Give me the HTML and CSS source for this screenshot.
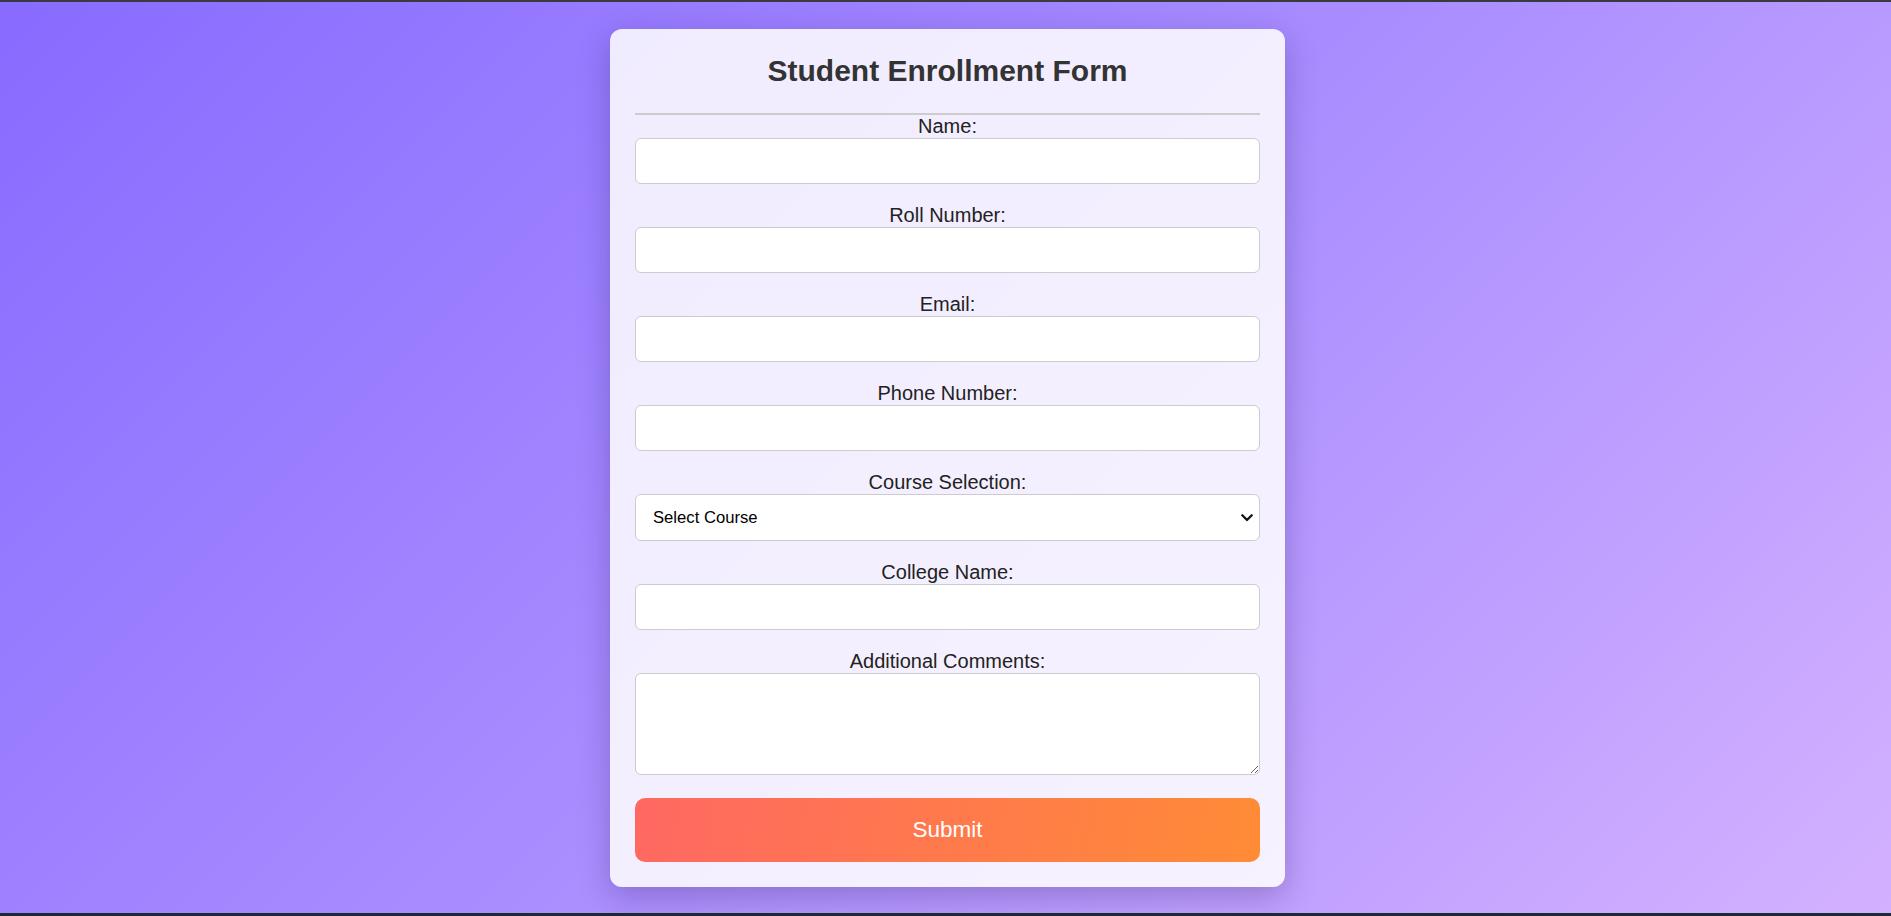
FILE: index.html
```html
<!DOCTYPE html>
<html lang="en">
<head>
<meta charset="UTF-8">
<title>Student Enrollment Form</title>
<link rel="stylesheet" href="styles.css">
</head>
<body>
  <div class="card">
    <h2 class="title">Student Enrollment Form</h2>
    <form class="form">
      <div class="group">
        <label class="label" for="name">Name:</label>
        <input class="field" type="text" id="name">
      </div>
      <div class="group">
        <label class="label" for="roll">Roll Number:</label>
        <input class="field" type="text" id="roll">
      </div>
      <div class="group">
        <label class="label" for="email">Email:</label>
        <input class="field" type="email" id="email">
      </div>
      <div class="group">
        <label class="label" for="phone">Phone Number:</label>
        <input class="field" type="tel" id="phone">
      </div>
      <div class="group">
        <label class="label" for="course">Course Selection:</label>
        <div class="select-wrap">
          <select class="field select" id="course">
            <option>Select Course</option>
          </select>
          <svg class="chevron" width="12" height="8" viewBox="0 0 12 8" aria-hidden="true">
            <path d="M1.3 1.3 L6 6 L10.7 1.3" fill="none" stroke="#111" stroke-width="2.3" stroke-linecap="round" stroke-linejoin="round"/>
          </svg>
        </div>
      </div>
      <div class="group">
        <label class="label" for="college">College Name:</label>
        <input class="field" type="text" id="college">
      </div>
      <div class="group">
        <label class="label" for="comments">Additional Comments:</label>
        <textarea class="field textarea" id="comments"></textarea>
      </div>
      <button class="submit" type="button">Submit</button>
    </form>
  </div>
</body>
</html>
```
FILE: styles.css
```css
* {
  box-sizing: border-box;
}

html, body {
  margin: 0;
  padding: 0;
}

body {
  height: 916px;
  padding-top: 27px;
  border-top: 2px solid #3b3b3d;
  border-bottom: 3px solid #1d2a33;
  background: linear-gradient(135deg, #886bff 0%, #a98dff 50%, #d4b1ff 100%);
  font-family: "Liberation Sans", Arial, sans-serif;
  display: flex;
  align-items: flex-start;
  justify-content: center;
  overflow: hidden;
}

.card {
  width: 675px;
  padding: 25px;
  background: rgba(255, 255, 255, 0.86);
  border-radius: 12px;
  box-shadow: 0 10px 32px rgba(40, 20, 90, 0.28);
  text-align: center;
  margin-left: 4px;
}

.title {
  margin: 0;
  padding-bottom: 24px;
  border-bottom: 2px solid #cccccc;
  font-size: 30px;
  font-weight: bold;
  color: #333333;
  line-height: 34.5px;
}

.form {
  display: block;
}

.group {
  margin-bottom: 20px;
}

.label {
  display: block;
  font-size: 20px;
  line-height: 23px;
  color: #222222;
}

.field {
  display: block;
  width: 100%;
  height: 46px;
  padding: 12px;
  font-family: "Liberation Sans", Arial, sans-serif;
  font-size: 16.67px;
  color: #000;
  background: #ffffff;
  border: 1px solid #cccccc;
  border-radius: 6px;
  outline: none;
}

.select-wrap {
  position: relative;
}

.select {
  height: 47px;
  padding-left: 17px;
  -webkit-appearance: none;
  appearance: none;
}

.chevron {
  position: absolute;
  right: 7px;
  top: 20px;
  pointer-events: none;
}

.textarea {
  height: 102px;
  resize: vertical;
}

.submit {
  display: block;
  width: 100%;
  height: 64px;
  margin-top: 23.5px;
  border: none;
  border-radius: 10px;
  background: linear-gradient(100deg, #ff6862 0%, #ff8b36 100%);
  color: #ffffff;
  font-family: "Liberation Sans", Arial, sans-serif;
  font-size: 22.5px;
  cursor: pointer;
}
```
